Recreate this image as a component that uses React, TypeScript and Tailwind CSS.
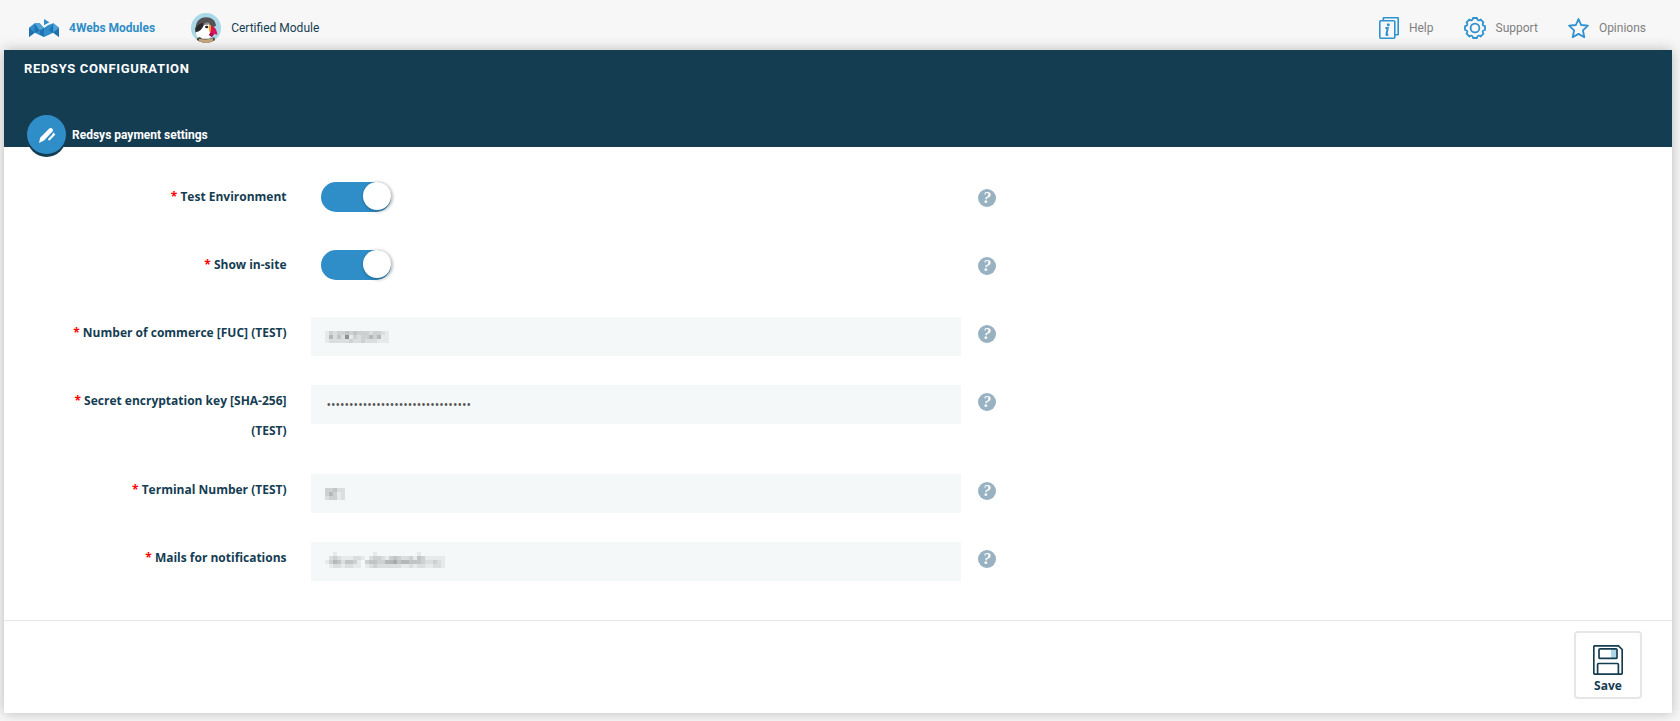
import { useState } from 'react';
import type { ReactNode } from 'react';

type Field = {
  id: string;
  label: string;
  kind: 'switch' | 'text' | 'password';
  mask?: string[];
};

// Each digit of a mask is the strength of one 4px block
const FIELDS: Field[] = [
  { id: 'test-env', label: 'Test Environment', kind: 'switch' },
  { id: 'in-site', label: 'Show in-site', kind: 'switch' },
  {
    id: 'fuc',
    label: 'Number of commerce [FUC] (TEST)',
    kind: 'text',
    mask: ['1323343433323321', '1524281323353511', '1222223223222111'],
  },
  { id: 'secret', label: 'Secret encryptation key [SHA-256] (TEST)', kind: 'password' },
  { id: 'terminal', label: 'Terminal Number (TEST)', kind: 'text', mask: ['33422', '35312', '23312'] },
  {
    id: 'mails',
    label: 'Mails for notifications',
    kind: 'text',
    mask: [
      '001000000000100000000001000000',
      '023211122102332134322314311111',
      '135424431034433556455444322321',
      '012212211012322222211212211221',
    ],
  },
];

function WebsLogo() {
  return (
    <svg className="h-[18px] w-[30px] shrink-0" viewBox="0 0 90 54" aria-hidden="true">
      <path fill="#2f8dcb" d="M0 26 17 13 32 13 45 27 58 18 73 13 90 26V54L73 41 60 47 45 54 30 47 17 41 0 54Z" />
      <path fill="#2272ad" d="M0 26 17 41 0 54ZM17 13 32 36 17 41ZM45 27V54L32 46 34 34ZM73 13 60 36 73 41ZM90 26 73 41 90 54Z" />
      <path fill="#4ea3da" d="M17 13H32L45 27 32 34ZM73 13 90 26 73 38Z" />
      <path fill="#2f8dcb" d="M45 0 61 10 45 19Z" />
    </svg>
  );
}

function PuffinBadge() {
  return (
    <svg className="size-[30px] shrink-0" viewBox="0 0 90 90" aria-hidden="true">
      <defs>
        <clipPath id="badge">
          <circle cx="45" cy="45" r="45" />
        </clipPath>
      </defs>
      <g clipPath="url(#badge)">
        <rect width="90" height="90" fill="#a9d8e6" />
        <path fill="#555154" d="M15 52C11 30 24 13 45 13c17 0 28 9 30 25L58 46 26 72Z" />
        <path fill="#2b292b" d="M13 46c4-8 12-14 22-17l4 10-20 28c-5-6-7-13-6-21Z" />
        <path fill="#fff" d="M14 58c11-2 19-9 23-19 6-10 19-9 23 1l-1 32c-9 9-27 11-36 4-5-4-8-11-9-18Z" />
        <path fill="#8d8a8c" d="M37 36c5-9 14-11 20-5l-6 4Z" />
        <ellipse cx="47" cy="42" rx="5" ry="4" fill="#262426" />
        <path fill="#f6a61c" d="M54 36c5 0 8 4 8 8l-2 20c-6-8-8-18-6-28Z" />
        <path fill="#d8145f" d="M60 39c11 0 18 11 19 26l-10-2-6 9-9-6c5-8 7-17 6-27Z" />
        <path fill="#a80f4a" d="M59 60l10 3-6 9-9-6Z" />
        <path fill="#4d463e" d="M18 76l8-4 8 5h22l14-4 4 17H16Z" />
        <path fill="#c4a57b" d="M24 77c14 3 28 3 42-1v14H24Z" />
      </g>
    </svg>
  );
}

function HelpIcon() {
  return (
    <svg className="h-[22px] w-5" viewBox="0 0 20 22" fill="none" stroke="#2f92d0" strokeWidth="1.6" aria-hidden="true">
      <rect x="0.8" y="3.8" width="15" height="17.4" rx="1" />
      <path d="M4.3 3.5V1.3q0-.5.5-.5h13.9q.5 0 .5.5v16q0 .5-.5.5h-2.5" />
      <circle cx="9.3" cy="7.7" r="1.5" fill="#2f92d0" stroke="none" />
      <path d="M6.4 11h2.3l-1.2 6.2q-.2 1 .8.6l1-.5" strokeWidth="2" />
    </svg>
  );
}

function GearIcon() {
  return (
    <svg className="size-[22px]" viewBox="0 0 22 22" fill="none" stroke="#2f92d0" strokeWidth="1.8" strokeLinejoin="round" aria-hidden="true">
      <path d="M21 12.950Q17.280 13.600 19.460 16.700L16.700 19.460Q13.600 17.280 12.950 21H9.050Q8.400 17.280 5.300 19.460L2.540 16.700Q4.720 13.600 1 12.950V9.050Q4.720 8.400 2.540 5.300L5.300 2.540Q8.400 4.720 9.050 1H12.950Q13.600 4.720 16.700 2.540L19.460 5.300Q17.280 8.400 21 9.050Z" />
      <circle cx="11" cy="11" r="4.4" />
    </svg>
  );
}

function StarIcon() {
  return (
    <svg className="h-[22px] w-[21px]" viewBox="0 0 21 22" fill="none" stroke="#2f92d0" strokeWidth="1.8" strokeLinejoin="round" aria-hidden="true">
      <path d="M10.500 2 13.100 8 19.900 8.700 14.900 13.300 16.300 20.200 10.500 16.900 4.700 20.200 6.100 13.300 1.100 8.700 7.900 8Z" />
    </svg>
  );
}

function SaveIcon() {
  return (
    <svg className="size-[30px]" viewBox="0 0 30 30" fill="none" stroke="#153d52" strokeWidth="1.7" strokeLinejoin="round" aria-hidden="true">
      <path d="M2 .8h23.500L29.200 4.500V28q0 1.200-1.200 1.200H2Q.8 29.200.8 28V2Q.8.8 2 .8Z" />
      <path d="M18 4h5v9h-5Z" fill="#a9d8e6" stroke="none" />
      <rect x="6" y="3.800" width="18" height="9.600" rx="1" />
      <path d="M4.600 29V19.500q0-1 1-1h18.800q1 0 1 1V29" />
    </svg>
  );
}

function Mask({ rows }: { rows: string[] }) {
  return (
    <svg
      className="pointer-events-none absolute bottom-[13px] left-[14px]"
      width={rows[0].length * 4}
      height={rows.length * 4}
      fill="#777"
      shapeRendering="crispEdges"
      aria-hidden="true"
    >
      {rows.map((row, y) =>
        [...row].map((n, x) => (
          <rect key={`${x}-${y}`} x={x * 4} y={y * 4} width="4" height="4" opacity={Number(n) / 10} />
        )),
      )}
    </svg>
  );
}

function Switch({ id }: { id: string }) {
  const [on, setOn] = useState(true);

  return (
    <input
      id={id}
      type="checkbox"
      role="switch"
      checked={on}
      onChange={() => setOn(!on)}
      className="mt-px ml-[10px] flex h-[30px] w-[70px] cursor-pointer appearance-none rounded-full bg-gray-300 before:size-7 before:rounded-full before:bg-white before:shadow-[1px_1px_3px_1px_rgba(0,0,0,0.25)] checked:justify-end checked:bg-[#2f8dc8]"
    />
  );
}

function FieldRow({ field }: { field: Field }) {
  return (
    <div className="flex min-h-[39px] items-start">
      <label
        htmlFor={field.id}
        className="mr-[23px] -mb-px w-[17%] pt-px pr-px pl-10 text-right text-xs leading-[30px] font-bold text-[#153d52]"
      >
        <span className="text-[#f00]">*</span> {field.label}
      </label>
      <div className="relative mr-[17px] w-[39%]">
        {field.kind === 'switch' ? (
          <Switch id={field.id} />
        ) : (
          <input
            id={field.id}
            type={field.kind}
            defaultValue={field.kind === 'password' ? 'x'.repeat(32) : ''}
            className="block h-[39px] w-full bg-[#f4f8f9] px-4 text-xs text-[#555] outline-none"
          />
        )}
        {field.mask && <Mask rows={field.mask} />}
      </div>
      <button
        type="button"
        aria-label={`Help: ${field.label}`}
        className="mt-2 flex size-[18px] items-center justify-center rounded-full bg-[#98b2c2] font-['Liberation_Serif',serif] text-base leading-none font-bold text-white italic"
      >
        ?
      </button>
    </div>
  );
}

function TopLink({ icon, children }: { icon: ReactNode; children: ReactNode }) {
  return (
    <a href="#" className="flex items-center gap-[10px] text-[#808080]">
      {icon}
      <span>{children}</span>
    </a>
  );
}

export default function App() {
  return (
    <div className="min-h-screen bg-[#f7f7f7] px-1 pb-2 font-['Open_Sans','Noto_Sans',sans-serif]">
      {/* Top bar */}
      <div className="flex h-[50px] items-center justify-between pt-[5px] pr-[30px] pl-[25px] font-[Roboto,sans-serif] text-xs">
        <div className="flex items-center gap-9">
          <a href="#" className="flex items-center gap-[10px] font-bold text-[#2f8dc8]">
            <WebsLogo />
            <span>4Webs Modules</span>
          </a>
          <div className="flex items-center gap-[10px] text-[#153d52]">
            <PuffinBadge />
            <span>Certified Module</span>
          </div>
        </div>
        <nav className="flex items-center gap-[30px]">
          <TopLink icon={<HelpIcon />}>Help</TopLink>
          <TopLink icon={<GearIcon />}>Support</TopLink>
          <TopLink icon={<StarIcon />}>Opinions</TopLink>
        </nav>
      </div>

      {/* Panel */}
      <form className="mr-1 bg-white shadow-[0_0_12px_rgba(0,0,0,0.25)]" onSubmit={(e) => e.preventDefault()}>
        <header className="flex h-[97px] flex-col justify-between bg-[#153d52] pt-[9px] font-[Roboto,sans-serif] text-white">
          <h1 className="pl-5 text-[13px] leading-5 font-bold tracking-wider">REDSYS CONFIGURATION</h1>
          <div className="-mb-[7px] flex items-center gap-[6px] pl-[23px]">
            <div className="flex size-[39px] items-center justify-center rounded-full bg-[#2f8dc8] shadow-[0_3px_0_#153d52]">
              <svg className="size-[18px]" viewBox="0 0 18 18" fill="#fff" aria-hidden="true">
                <path d="M1 17 2.200 11.800 11.200 2.600q1.500-1.300 3 0 1.600 1.500.3 3L6 14.400Z" />
                <path d="M15.200 6.400 17.400 8.400 11.300 14.700 9.800 13.300 14 9.100Z" />
              </svg>
            </div>
            <h2 className="text-xs font-bold">Redsys payment settings</h2>
          </div>
        </header>

        <div className="flex flex-col gap-[29px] pt-[34px] pb-[39px]">
          {FIELDS.map((field) => (
            <FieldRow key={field.id} field={field} />
          ))}
        </div>

        <footer className="flex justify-end border-t border-[#e4e6e7] px-[30px] pt-[10px] pb-[14px]">
          <button
            type="submit"
            className="flex size-[68px] flex-col items-center justify-end gap-[3px] rounded border-2 border-[#e4e6e7] bg-white pb-[3px] text-xs font-bold text-[#153d52]"
          >
            <SaveIcon />
            Save
          </button>
        </footer>
      </form>
    </div>
  );
}
